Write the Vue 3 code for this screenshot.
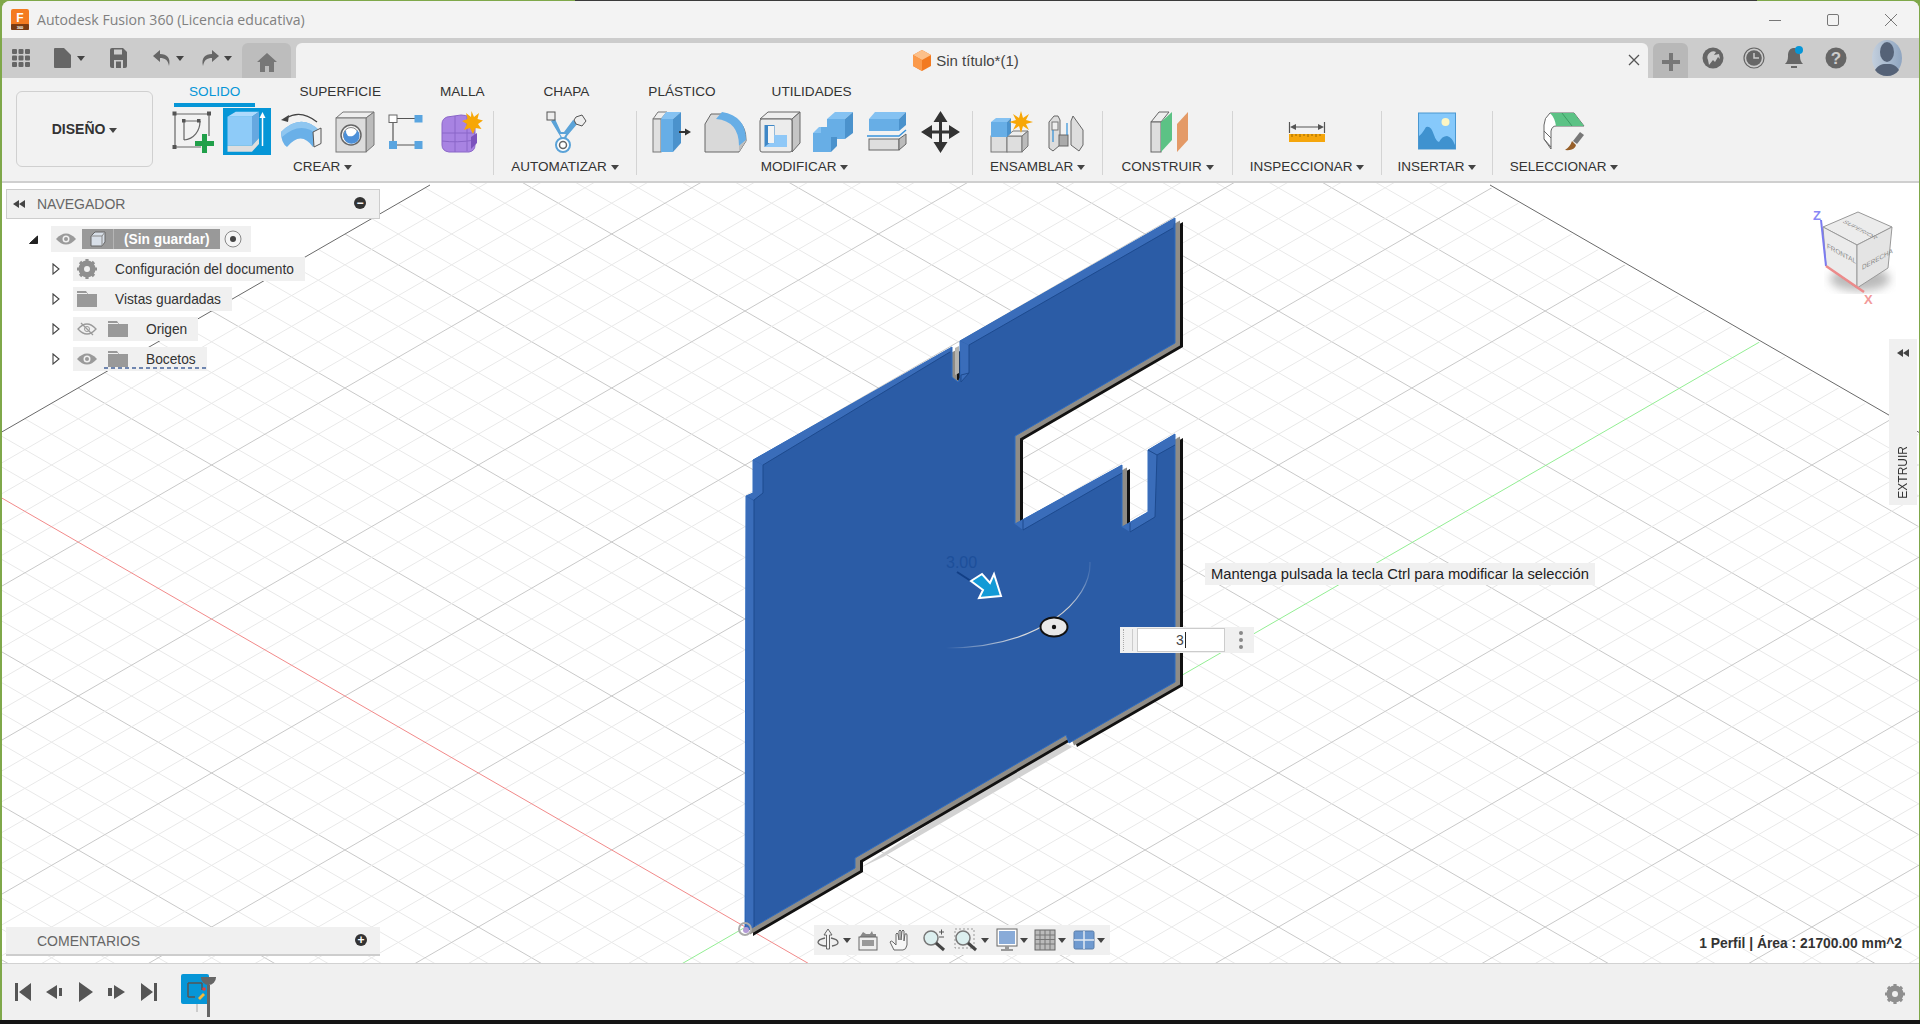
<template>
  <div class="desktop">
    <div class="window">
      <!-- title bar -->
      <header class="titlebar">
        <svg class="logo" width="20" height="22" viewBox="0 0 20 22">
          <rect x="1" y="0" width="18" height="21" rx="2" fill="#f47b20" />
          <rect x="1" y="15" width="18" height="6" rx="1" fill="#7a3b12" />
          <text x="10" y="13" text-anchor="middle" class="logo-f">F</text>
          <text x="10" y="20" text-anchor="middle" class="logo-n">360</text>
        </svg>
        <span class="app-title">Autodesk Fusion 360 (Licencia educativa)</span>
        <div class="win-controls">
          <svg width="14" height="14" viewBox="0 0 14 14"><path d="M1 7.500h12" stroke="#777" /></svg>
          <svg width="14" height="14" viewBox="0 0 14 14"><rect x="1.500" y="1.500" width="11" height="11" rx="1.500" fill="none" stroke="#777" /></svg>
          <svg width="14" height="14" viewBox="0 0 14 14"><path d="M1 1l12 12M13 1L1 13" stroke="#777" /></svg>
        </div>
      </header>

      <!-- document tabs -->
      <div class="tabbar">
        <svg class="tb-apps" width="18" height="18" viewBox="0 0 18 18" fill="#666">
          <rect x="0" y="0" width="5" height="5" rx="1" /><rect x="6.500" y="0" width="5" height="5" rx="1" /><rect x="13" y="0" width="5" height="5" rx="1" />
          <rect x="0" y="6.500" width="5" height="5" rx="1" /><rect x="6.500" y="6.500" width="5" height="5" rx="1" /><rect x="13" y="6.500" width="5" height="5" rx="1" />
          <rect x="0" y="13" width="5" height="5" rx="1" /><rect x="6.500" y="13" width="5" height="5" rx="1" /><rect x="13" y="13" width="5" height="5" rx="1" />
        </svg>
        <svg class="tb-file" width="17" height="20" viewBox="0 0 17 20"><path d="M0 1a1 1 0 0 1 1-1h9l7 7v12a1 1 0 0 1-1 1H1a1 1 0 0 1-1-1z" fill="#666" /></svg>
        <i class="caret tb-c1"></i>
        <svg class="tb-save" width="17" height="20" viewBox="0 0 17 20"><path d="M0 2a2 2 0 0 1 2-2h11l4 4v14a2 2 0 0 1-2 2H2a2 2 0 0 1-2-2z" fill="#666" /><rect x="4" y="1.500" width="8" height="5" fill="#ccc" /><rect x="4" y="12" width="9" height="8" fill="#ccc" /><rect x="6" y="13.500" width="5" height="6.500" fill="#666" /></svg>
        <svg class="tb-undo" width="20" height="18" viewBox="0 0 20 18"><path d="M8 1L1 7l7 6V9c5 0 8 2 9 8 2-8-2-12-9-12z" fill="#666" /></svg>
        <i class="caret tb-c2"></i>
        <svg class="tb-redo" width="20" height="18" viewBox="0 0 20 18"><path d="M12 1l7 6-7 6V9c-5 0-8 2-9 8C1 9 5 5 12 5z" fill="#666" /></svg>
        <i class="caret tb-c2"></i>
        <div class="home-tab">
          <svg width="20" height="19" viewBox="0 0 20 19"><path d="M10 0L0 9h3v10h5v-6h4v6h5V9h3z" fill="#777" /></svg>
        </div>
        <div class="doc-tab">
          <svg width="20" height="21" viewBox="0 0 20 21">
            <path d="M10 0l9 5v11l-9 5-9-5V5z" fill="#f27a21" />
            <path d="M10 0l9 5-9 5-9-5z" fill="#fcc08a" />
            <path d="M1 5l9 5v11l-9-5z" fill="#fb9a4b" />
          </svg>
          <span>Sin título*(1)</span>
          <svg class="doc-close" width="12" height="12" viewBox="0 0 12 12"><path d="M1 1l10 10M11 1L1 11" stroke="#555" stroke-width="1.300" /></svg>
        </div>
        <div class="plus-tab">
          <svg width="18" height="18" viewBox="0 0 18 18"><path d="M7 0h4v7h7v4h-7v7H7v-7H0V7h7z" fill="#777" /></svg>
        </div>
        <svg class="tr tr-1" width="22" height="24" viewBox="0 0 22 24">
          <circle cx="11" cy="12" r="10.500" fill="#666" />
          <path d="M6 14a6 6 0 0 1 8-8l-2 3 5-1 1 5-2-2-3 5-2-2-4 5z" fill="#ccc" />
        </svg>
        <svg class="tr tr-2" width="22" height="24" viewBox="0 0 22 24">
          <circle cx="11" cy="12" r="10" fill="none" stroke="#666" stroke-width="1.200" />
          <circle cx="11" cy="12" r="7.800" fill="#666" />
          <path d="M11 7v5h5" stroke="#ccc" stroke-width="1.500" fill="none" />
        </svg>
        <svg class="tr tr-3" width="22" height="26" viewBox="0 0 22 26">
          <path d="M9 3c-4 1-5 4-5 8 0 4-1 6-3 8h18c-2-2-3-4-3-8 0-4-1-7-5-8z" fill="#666" />
          <rect x="7" y="21" width="6" height="2" fill="#666" />
          <circle cx="15" cy="5" r="4" fill="#0696d7" />
        </svg>
        <svg class="tr tr-4" width="22" height="24" viewBox="0 0 22 24">
          <circle cx="11" cy="12" r="10.500" fill="#666" />
          <text x="11" y="18" text-anchor="middle" class="help-q">?</text>
        </svg>
        <svg class="tr tr-5" width="30" height="36" viewBox="0 0 30 36">
          <defs>
            <linearGradient id="av" x1="0" y1="0" x2="1" y2="0"><stop offset="0" stop-color="#c3cfdd" /><stop offset="1" stop-color="#8fa5c0" /></linearGradient>
          </defs>
          <ellipse cx="15" cy="18" rx="15" ry="18" fill="url(#av)" />
          <ellipse cx="15" cy="12" rx="7" ry="10" fill="#556277" />
          <path d="M3 30c4-6 8-6 12-6s8 0 12 6c-3 4-7 6-12 6S6 34 3 30z" fill="#556277" />
        </svg>
      </div>

      <!-- ribbon -->
      <div class="ribbon">
        <button class="design-btn">DISEÑO <i class="caret"></i></button>
        <div class="ribbon-main">
          <nav class="ribbon-tabs">
            <span v-for="t in ribbonTabs" :key="t" class="r-tab" :class="{ active: t === 'SOLIDO' }">{{ t }}</span>
          </nav>
          <div class="groups">
            <section class="group g-create">
              <div class="tools">
                <svg class="tool" viewBox="0 0 54 54">
                  <path d="M6 6h34M6 6v33M6 39h26M40 6v22" stroke="#666" fill="none" stroke-width="1.200" />
                  <path d="M15 13h14M15 13v19M31 13c0 10-6 18-16 19" stroke="#666" fill="none" stroke-width="1.200" />
                  <g fill="#555"><rect x="3.500" y="3.500" width="4" height="4" /><rect x="38" y="3.500" width="4" height="4" /><rect x="3.500" y="37" width="4" height="4" /><rect x="13" y="11" width="3.500" height="3.500" /><rect x="28" y="11" width="3.500" height="3.500" /></g>
                  <path d="M33 26h5v7h7v5h-7v7h-5v-7h-7v-5h7z" fill="#21a04a" />
                </svg>
                <svg class="tool" viewBox="0 0 54 54">
                  <rect x="0" y="0" width="48" height="47" fill="#0696d7" />
                  <polygon points="4.500,8.700 12.700,3.700 36,3.700 29,8.700" fill="#aedafc" />
                  <rect x="4.500" y="8.700" width="24.500" height="29" fill="#8ecbf8" />
                  <polygon points="29,8.700 36,3.700 36,30 29,37.700" fill="#66a8e0" />
                  <polygon points="4.500,37.700 29,37.700 36,30 36,36 29,43.700 4.500,43.700" fill="#dedede" />
                  <path d="M39.500 38V8" stroke="#fff" stroke-width="1.500" />
                  <path d="M39.500 4l3 6h-6z" fill="#fff" />
                </svg>
                <svg class="tool" viewBox="0 0 54 54">
                  <path d="M4 24Q24 4 43 23L36 39Q24 22 10 39Q4 35 4 24Z" fill="#6ab0e8" />
                  <path d="M4 24Q24 4 43 23L41 27Q24 12 5 29Z" fill="#8fc6f0" />
                  <path d="M36 24l8-4v15.500l-7 3.500z" fill="#f0f0f0" stroke="#555" />
                  <path d="M40 14Q24 1 9 10" stroke="#444" fill="none" stroke-width="1.300" />
                  <path d="M4 12l8-5-1 7z" fill="#444" />
                </svg>
                <svg class="tool" viewBox="0 0 54 54">
                  <polygon points="5,10 12,4 43,4 35,10" fill="#eee" stroke="#777" />
                  <polygon points="35,10 43,4 43,37 35,44" fill="#bbb" stroke="#777" />
                  <rect x="5" y="10" width="30" height="34" fill="#dcdcdc" stroke="#777" />
                  <circle cx="20" cy="27" r="10" fill="#f5f5f5" stroke="#666" stroke-width="1.500" />
                  <circle cx="20" cy="27" r="7.500" fill="#fff" stroke="#888" />
                  <path d="M15 22a8 8 0 1 0 11 0 7 7 0 0 1-9 6 7 7 0 0 1-2-6z" fill="#4d90d8" />
                </svg>
                <svg class="tool" viewBox="0 0 54 54">
                  <path d="M12 10.500h18M8 14v19M12 37h18" stroke="#555" stroke-width="1.200" />
                  <rect x="4" y="7" width="8" height="7.500" fill="#fff" stroke="#666" />
                  <rect x="29.500" y="7" width="8" height="7.500" fill="#5aa5e0" />
                  <rect x="4" y="33" width="8" height="8" fill="#5aa5e0" />
                  <rect x="29.500" y="33" width="8" height="8" fill="#5aa5e0" />
                </svg>
                <svg class="tool" viewBox="0 0 54 54">
                  <path d="M3 16q0-5 5-7l14-2q10 0 14 8v22q0 6-6 7H10q-7-1-7-7z" fill="#a883e2" stroke="#8a66c8" />
                  <path d="M3 25h33M3 33q15 2 33-1M16 8v36M28 8v35" stroke="#8a66c8" fill="none" />
                  <path d="M32 29l6-4v10l-6 6z" fill="#7b52bd" />
                  <polygon points="32.500,3 35,9 40,5 38.500,11 44,12.500 39,16 42.500,21 36.500,20 34,26 31,20 25,22 28,16 23,13 28.500,11 27,5 32,9" fill="#f7a707" />
                </svg>
              </div>
              <div class="label">CREAR <i class="caret"></i></div>
            </section>
            <i class="sep"></i>
            <section class="group g-auto">
              <div class="tools">
                <svg class="tool" viewBox="0 0 54 54">
                  <path d="M13 13l9 15 2 6h3l2-6 11-13-5-3-9 12h-3l-6-13z" fill="#5ba3d8" />
                  <path d="M22 26l3 5 3-5z" fill="#f2f2f2" />
                  <circle cx="25" cy="37" r="7" fill="#fff" stroke="#5ba3d8" stroke-width="2" />
                  <circle cx="25" cy="37" r="3.500" fill="none" stroke="#666" stroke-width="1.500" />
                  <rect x="9" y="4" width="8" height="8" fill="#eee" stroke="#555" />
                  <polygon points="38,9 44,7 48,13 44,18 38,16 36,12" fill="#eee" stroke="#555" />
                </svg>
              </div>
              <div class="label">AUTOMATIZAR <i class="caret"></i></div>
            </section>
            <i class="sep"></i>
            <section class="group g-modify">
              <div class="tools">
                <svg class="tool" viewBox="0 0 54 54">
                  <polygon points="10,11 15,4 24,4 18,11" fill="#eee" stroke="#777" />
                  <rect x="10" y="11" width="8" height="33" fill="#e0e0e0" stroke="#777" />
                  <rect x="18" y="11" width="12" height="33" fill="#67aee6" />
                  <polygon points="18,11 23,4 38,4 30,11" fill="#85c2f2" />
                  <polygon points="30,11 38,4 38,35 30,44" fill="#4b92cc" />
                  <path d="M36 24h7" stroke="#333" stroke-width="2" /><path d="M48 24l-6-3.500v7z" fill="#333" />
                </svg>
                <svg class="tool" viewBox="0 0 54 54">
                  <path d="M8 44V16l6-10h10q25 3 25 26v1l-7 11z" fill="#d9d9d9" stroke="#666" />
                  <path d="M19 11l6-7q24 4 24 28l-7 6q0-25-23-27z" fill="#67aee6" />
                  <path d="M42 38l7-6v1l-7 11z" fill="#bdbdbd" />
                </svg>
                <svg class="tool" viewBox="0 0 54 54">
                  <polygon points="9,11 17,4 49,4 41,11" fill="#eee" stroke="#666" />
                  <polygon points="41,11 49,4 49,35 41,44" fill="#c5c5c5" stroke="#666" />
                  <rect x="9" y="11" width="32" height="33" rx="2" fill="#ececec" stroke="#666" />
                  <rect x="13.500" y="17" width="10" height="22" fill="#3f87c6" />
                  <rect x="17" y="18" width="6" height="17" fill="#f4f4f4" />
                  <path d="M23 27h13v12H13.500l5-4h5z" fill="#8fc8f7" />
                </svg>
                <svg class="tool" viewBox="0 0 54 54">
                  <polygon points="22,11 30,4 48,4 40,11" fill="#85c2f2" />
                  <polygon points="40,11 48,4 48,25 40,31" fill="#4b92cc" />
                  <rect x="22" y="11" width="18" height="20" fill="#67aee6" />
                  <polygon points="8,25 14,19 32,19 26,25" fill="#85c2f2" />
                  <rect x="8" y="25" width="18" height="19" fill="#67aee6" />
                  <polygon points="26,25 32,19 32,38 26,44" fill="#4b92cc" />
                  <rect x="16" y="19" width="16" height="10" fill="#67aee6" />
                </svg>
                <svg class="tool" viewBox="0 0 54 54">
                  <polygon points="10,11 16,4 47,4 40,11" fill="#85c2f2" />
                  <rect x="10" y="11" width="30" height="12" fill="#67aee6" />
                  <polygon points="40,11 47,4 47,17 40,23" fill="#4b92cc" />
                  <path d="M8 28h32l7-6" stroke="#3a94dc" stroke-width="1.500" fill="none" />
                  <rect x="10" y="31" width="30" height="11" fill="#dedede" stroke="#666" />
                  <polygon points="40,31 47,26 47,36 40,42" fill="#bbb" stroke="#666" />
                </svg>
                <svg class="tool" viewBox="0 0 54 54">
                  <path d="M27.500 6v36M11 24h33" stroke="#333" stroke-width="3" />
                  <path d="M27.500 3l7 11h-14zM27.500 45l7-11h-14zM8 24l11-7v14zM47 24l-11-7v14z" fill="#333" />
                </svg>
              </div>
              <div class="label">MODIFICAR <i class="caret"></i></div>
            </section>
            <i class="sep"></i>
            <section class="group g-assemble">
              <div class="tools">
                <svg class="tool" viewBox="0 0 54 54">
                  <rect x="7" y="28" width="16" height="16" fill="#dedede" stroke="#777" />
                  <rect x="23" y="28" width="15" height="16" fill="#dedede" stroke="#777" />
                  <polygon points="23,28 29,23 44,23 38,28" fill="#eee" stroke="#777" />
                  <polygon points="38,28 44,23 44,38 38,44" fill="#bbb" stroke="#777" />
                  <rect x="7" y="14" width="16" height="15" fill="#67aee6" />
                  <polygon points="7,14 12,10 27,10 23,14" fill="#85c2f2" />
                  <polygon points="23,14 27,10 27,25 23,29" fill="#4b92cc" />
                  <polygon points="37,3 39,10 45,6 42,12 49,14 42,16 45,22 39,18 37,25 35,18 29,22 32,16 25,14 32,12 29,6 35,10" fill="#f7a707" />
                </svg>
                <svg class="tool" viewBox="0 0 54 54">
                  <path d="M11 14l5-6h4l2 4v25l-7 6-4-3z" fill="#ddd" stroke="#666" />
                  <path d="M33 13l2-5 10 14v15l-4 6-8-6z" fill="#ddd" stroke="#666" />
                  <rect x="21" y="27" width="9" height="11" fill="#aaa" stroke="#666" />
                  <rect x="14" y="14" width="6" height="8" fill="#eee" stroke="#777" />
                  <path d="M15 22v12M29 15v12" stroke="#2f8fd8" stroke-width="1.200" />
                </svg>
              </div>
              <div class="label">ENSAMBLAR <i class="caret"></i></div>
            </section>
            <i class="sep"></i>
            <section class="group g-build">
              <div class="tools">
                <svg class="tool" viewBox="0 0 54 54">
                  <polygon points="10,14 18,4 28,4 20,14" fill="#eee" stroke="#666" />
                  <rect x="10" y="14" width="10" height="30" fill="#dedede" stroke="#666" />
                  <polygon points="20,14 31,4 31,32 20,44" fill="#5cc285" />
                  <polygon points="36,16 47,4 47,32 36,44" fill="#e49a67" />
                </svg>
              </div>
              <div class="label">CONSTRUIR <i class="caret"></i></div>
            </section>
            <i class="sep"></i>
            <section class="group g-inspect">
              <div class="tools">
                <svg class="tool" viewBox="0 0 54 54">
                  <path d="M9.500 14v11M44.500 14v11M13 19h28" stroke="#555" stroke-width="1.200" />
                  <path d="M10 19l6-3v6zM44 19l-6-3v6z" fill="#555" />
                  <rect x="9" y="26" width="36" height="8" fill="#f5a60c" />
                  <path d="M12 26v3M16 26v2M20 26v3M24 26v2M28 26v3M32 26v2M36 26v3M40 26v2" stroke="#9a6700" />
                </svg>
              </div>
              <div class="label">INSPECCIONAR <i class="caret"></i></div>
            </section>
            <i class="sep"></i>
            <section class="group g-insert">
              <div class="tools">
                <svg class="tool" viewBox="0 0 54 54">
                  <rect x="8.500" y="5" width="37" height="36" fill="#86c9fb" stroke="#4a97d0" />
                  <circle cx="35.500" cy="14" r="4" fill="#fdf6c4" />
                  <path d="M9 41V28q3-2 7-9 5-2 8 8 2 6 5 7 3-6 8-6 5 1 8 9v4z" fill="#3f92cf" />
                </svg>
              </div>
              <div class="label">INSERTAR <i class="caret"></i></div>
            </section>
            <i class="sep"></i>
            <section class="group g-select">
              <div class="tools">
                <svg class="tool" viewBox="0 0 54 54">
                  <path d="M7 17q0-7 6-12h24l10 13H19q-4 0-5 5v18l-7-10z" fill="#fff" stroke="#666" />
                  <path d="M7 23l7 7M7 31l7 8" stroke="#666" />
                  <path d="M13 5h24l10 13H19q-1-8-6-13z" fill="#5cc285" />
                  <path d="M25 5l10 13" stroke="#3d9a63" />
                  <path d="M36 33l7-9 4 3-7 9z" fill="#777" />
                  <path d="M35 33l4 4q-1 6-11 5 5-3 7-9z" fill="#97602a" />
                </svg>
              </div>
              <div class="label">SELECCIONAR <i class="caret"></i></div>
            </section>
          </div>
        </div>
      </div>

      <!-- 3d canvas -->
      <main class="canvas">
        <svg class="scene" width="1917" height="780" viewBox="2 183 1917 780">
          <defs>
            <clipPath id="gridClip">
              <polygon points="958,-120 1930,441 1930,1100 0,1100 0,433" />
            </clipPath>
            <filter id="blur4"><feGaussianBlur stdDeviation="5" /></filter>
            <linearGradient id="arcFade" x1="0" y1="0" x2="1" y2="0">
              <stop offset="0" stop-color="#fff" stop-opacity="0" />
              <stop offset="0.55" stop-color="#dcdcdc" />
              <stop offset="0.85" stop-color="#d0d0d0" />
              <stop offset="1" stop-color="#fff" stop-opacity="0.1" />
            </linearGradient>
          </defs>
          <g clip-path="url(#gridClip)">
            <line v-for="l in gridLines" :key="l.id" :x1="l.x1" :y1="l.y1" :x2="l.x2" :y2="l.y2" :stroke="l.major ? '#c9c9c9' : '#e9e9e9'" />
            <line x1="0" y1="497" x2="1000" y2="1074" stroke="#f28a8a" />
            <line x1="600" y1="1011" x2="1763" y2="340" stroke="#93ee93" />
          </g>
          <path d="M0 433L430 185" stroke="#6a6a6a" />
          <path d="M1490 185L1920 433" stroke="#6a6a6a" />

          <!-- sólido -->
          <polygon points="860,868 1060,740 1072,747 883,857" fill="#d2d2d2" />
          <polygon :points="platePoints" transform="translate(8 4)" fill="#111" />
          <polygon :points="platePoints" transform="translate(5 2.500)" fill="#8f8c86" />
          <polygon points="955,348 959,346 959,373 955,375" fill="#b4b4b0" />
          <polygon :points="platePoints" fill="#2b5ca6" stroke="#2f6cc0" stroke-width="1" />
          <g fill="#3a6dba">
            <polygon points="1175,218 1173,228 969,345 960,341" />
            <polygon points="952,347 950,352 763,465 753,460" />
            <polygon points="753,460 763,465 763,493 754,500 746,496 753,493" />
            <polygon points="746,496 754,501 754,927 746,932" />
            <polygon points="960,341 969,345 969,373 961,382" />
            <polygon points="1122,465 1122,473 1023,530 1015,524" />
            <polygon points="1148,450 1157,455 1155,517 1130,532 1122,527 1148,512" />
            <polygon points="1148,450 1175,434 1175,445 1157,455" />
          </g>
          <g fill="none" stroke="#1d4a8e">
            <path d="M1173 228L969 345V373L961 382V375L969 373" />
            <path d="M950 352L763 465V493L754 500V927" />
            <path d="M1023 520V530L1122 473" />
            <path d="M1130 523V532L1155 517L1157 455L1175 445" />
            <path d="M1148 450L1157 455" />
          </g>

          <!-- manipulador -->
          <text x="946" y="568" class="dim-text">3.00</text>
          <path d="M957 572L974 583" stroke="#123f86" stroke-width="2" />
          <path d="M1090 562C1092 600 1040 648 946 648" fill="none" stroke="url(#arcFade)" stroke-width="1.200" />
          <polygon points="1001,596 979,598 983,590 971,581 982,574 990,583 994,574" fill="#129ad6" stroke="#fff" stroke-width="2" />
          <ellipse cx="1054" cy="627" rx="13.500" ry="9.500" fill="#e8e8e8" stroke="#111" stroke-width="2" />
          <circle cx="1054" cy="627" r="2.200" fill="#111" />

          <!-- origen -->
          <circle cx="745" cy="929" r="6" fill="none" stroke="#aaa" stroke-width="2" />
          <circle cx="746" cy="930" r="3" fill="#b39ad6" />

          <!-- viewcube -->
          <ellipse cx="1860" cy="279" rx="30" ry="12" fill="#777" opacity="0.5" filter="url(#blur4)" />
          <polygon points="1823,227 1858,212 1892,227 1857,245" fill="#ececec" stroke="#999" />
          <polygon points="1823,227 1857,245 1857,288 1826,266" fill="#ebebeb" stroke="#999" />
          <polygon points="1857,245 1892,227 1888,268 1857,288" fill="#e4e4e4" stroke="#999" />
          <path d="M1821 220L1826 266" stroke="#7b7bf0" stroke-width="2" />
          <path d="M1826 266L1864 292" stroke="#ec8a8a" stroke-width="2.500" />
          <text x="1813" y="220" class="axis-z">Z</text>
          <text x="1864" y="304" class="axis-x">X</text>
          <text class="cube-t" transform="matrix(.9 .48 -.8 .38 1842 222)">SUPERIOR</text>
          <text class="cube-t" transform="matrix(.9 .5 0 1 1827 248)">FRONTAL</text>
          <text class="cube-t" transform="matrix(.9 -.5 0 1 1862 270)">DERECHA</text>
        </svg>

        <!-- navegador -->
        <div class="panel nav-panel">
          <svg width="12" height="8" viewBox="0 0 12 8"><path d="M6 0v8L0 4zM12 0v8L6 4z" fill="#444" /></svg>
          <span>NAVEGADOR</span>
          <i class="dot-btn">−</i>
        </div>
        <div class="tree">
          <div class="tree-root">
            <svg class="root-arrow" width="9" height="9" viewBox="0 0 9 9"><path d="M8.500 1v7.500H.5z" fill="#222" stroke="#222" /></svg>
            <div class="pill pill-root">
              <svg class="eye" width="20" height="12" viewBox="0 0 20 12"><path d="M0 6q10-11 20 0Q10 17 0 6z" fill="#9a9a9a" /><circle cx="10" cy="6" r="3.500" fill="#f0f0f0" /><circle cx="10" cy="6" r="2" fill="#9a9a9a" /></svg>
              <div class="root-name">
                <span class="root-cube">
                  <svg width="16" height="16" viewBox="0 0 16 16"><path d="M1 5l4-4h10v10l-3 4H1z" fill="#d8dfe8" stroke="#666" /><path d="M1 5h11v10M12 5l3-4" stroke="#888" fill="none" /></svg>
                </span>
                <b>(Sin guardar)</b>
              </div>
              <svg class="radio" width="18" height="18" viewBox="0 0 18 18"><circle cx="9" cy="9" r="8" fill="#f5f5f5" stroke="#888" /><circle cx="9" cy="9" r="3" fill="#444" /></svg>
            </div>
          </div>
          <div v-for="row in treeRows" :key="row.name" class="tree-row">
            <svg class="arrow" width="8" height="12" viewBox="0 0 8 12"><path d="M1 1l6 5-6 5z" fill="#fff" stroke="#444" stroke-width="1.100" /></svg>
            <div class="pill" :class="{ sketches: row.name === 'Bocetos' }">
              <svg v-if="row.icon === 'gear'" class="ico" width="20" height="20" viewBox="0 0 20 20">
                <circle cx="10" cy="10" r="6" fill="none" stroke="#8f8f8f" stroke-width="5" />
                <path d="M10 0v20M0 10h20M3 3l14 14M17 3L3 17" stroke="#8f8f8f" stroke-width="3.200" />
                <circle cx="10" cy="10" r="3" fill="#f0f0f0" />
              </svg>
              <svg v-if="row.eye === 'on'" class="ico" width="20" height="12" viewBox="0 0 20 12"><path d="M0 6q10-11 20 0Q10 17 0 6z" fill="#9a9a9a" /><circle cx="10" cy="6" r="3.500" fill="#f0f0f0" /><circle cx="10" cy="6" r="2" fill="#9a9a9a" /></svg>
              <svg v-if="row.eye === 'off'" class="ico" width="20" height="14" viewBox="0 0 20 14"><path d="M1 7q9-10 18 0Q10 17 1 7z" fill="none" stroke="#9a9a9a" stroke-width="1.300" /><circle cx="10" cy="7" r="2.500" fill="none" stroke="#9a9a9a" /><path d="M4 1l12 12" stroke="#9a9a9a" stroke-width="1.300" /></svg>
              <svg class="ico folder" :class="{ first: !row.eye && row.icon !== 'gear' }" v-if="row.icon === 'folder'" width="20" height="16" viewBox="0 0 20 16"><path d="M0 0h9l2 3h9v13H0z" fill="#999" /><path d="M0 2.500h10" stroke="#f0f0f0" /></svg>
              <span class="row-name">{{ row.name }}</span>
            </div>
          </div>
        </div>

        <div class="panel comments-panel">
          <span>COMENTARIOS</span>
          <i class="dot-btn">+</i>
        </div>

        <!-- paleta lateral -->
        <aside class="side-palette">
          <svg width="12" height="8" viewBox="0 0 12 8"><path d="M6 0v8L0 4zM12 0v8L6 4z" fill="#444" /></svg>
          <span>EXTRUIR</span>
        </aside>

        <!-- ayuda y entrada -->
        <div class="hint">Mantenga pulsada la tecla Ctrl para modificar la selección</div>
        <div class="dim-input">
          <i class="grip"></i>
          <div class="dim-box"><span>3</span></div>
          <div class="dots"><i></i><i></i><i></i></div>
        </div>

        <!-- barra de navegación -->
        <div class="navbar">
          <svg class="nb m2" viewBox="0 0 24 24"><path d="M12 1l4 6h-2.500v14h-3V7H8z" fill="#f4f4f4" stroke="#666" /><path d="M9 10C4 11 2 13 2 14.500S6 18 10 18M15 10c5 1 7 3 7 4.500s-3 3-6 3.500" fill="none" stroke="#666" stroke-width="1.300" /></svg>
          <i class="caret c2"></i>
          <svg class="nb m4" viewBox="0 0 24 24"><path d="M3 10l4-6 3 2h4l2-3 1 3h3v4z" fill="#888" /><rect x="3" y="9" width="18" height="13" fill="#eee" stroke="#666" /><rect x="6" y="12" width="12" height="6" fill="#999" /></svg>
          <svg class="nb m9" viewBox="0 0 24 24"><path d="M5 22Q3 18 1 14q1-2 3 0l3 3V6q1-2 2 0l1 6V3q1-2 2 0v9l1-9q1-2 2 0v10l1-7q2-1 2 1v10q-1 5-4 5z" fill="#f6f6f6" stroke="#666" /></svg>
          <svg class="nb m9" viewBox="0 0 24 24"><circle cx="9" cy="10" r="7" fill="#dcefef" stroke="#777" stroke-width="1.500" /><path d="M14 15l8 7" stroke="#444" stroke-width="3" /><path d="M17 4h5M19.500 1.500v5M17 9h5" stroke="#555" /></svg>
          <svg class="nb m8" viewBox="0 0 24 24"><rect x="1" y="1" width="19" height="19" fill="none" stroke="#999" stroke-dasharray="2 2" /><circle cx="9" cy="10" r="7" fill="#dcefef" stroke="#777" stroke-width="1.500" /><path d="M14 15l8 7" stroke="#444" stroke-width="3" /></svg>
          <i class="caret c2"></i>
          <svg class="nb m5" viewBox="0 0 24 24"><rect x="2" y="1" width="20" height="17" fill="#fff" stroke="#666" /><rect x="4" y="3" width="16" height="13" fill="#89abd8" /><rect x="10" y="18" width="4" height="3" fill="#999" /><rect x="6" y="21" width="12" height="2" fill="#999" /></svg>
          <i class="caret c0"></i>
          <svg class="nb m4" viewBox="0 0 24 24"><rect x="2" y="2" width="20" height="20" fill="#bbb" stroke="#666" /><path d="M2 7h20M2 11.500h20M2 16h20M7 2v20M12 2v20M17 2v20" stroke="#777" fill="none" /></svg>
          <i class="caret c0"></i>
          <svg class="nb m5" viewBox="0 0 24 24"><rect x="2" y="3" width="20" height="18" rx="1.500" fill="#6f9ad0" stroke="#5a7da8" /><path d="M12 3v18M2 12h20" stroke="#e4eaf2" stroke-width="1.500" /></svg>
          <i class="caret c0"></i>
        </div>

        <div class="measure">1 Perfil | Área : 21700.00 mm^2</div>
      </main>

      <!-- línea de tiempo -->
      <footer class="timeline">
        <svg class="tl t1" width="16" height="25" viewBox="0 0 16 25"><path d="M0 3h3v18H0zM16 3v18L4 12z" fill="#555" /></svg>
        <svg class="tl t2" width="16" height="25" viewBox="0 0 16 25"><path d="M11 5v14L0 12zM13 8h3v8h-3z" fill="#555" /></svg>
        <svg class="tl t3" width="16" height="25" viewBox="0 0 16 25"><path d="M1 2l14 10L1 22z" fill="#555" /></svg>
        <svg class="tl t4" width="17" height="25" viewBox="0 0 17 25"><path d="M6 5v14l11-7zM0 8h4v8H0z" fill="#555" /></svg>
        <svg class="tl t5" width="16" height="25" viewBox="0 0 16 25"><path d="M0 3v18l12-9zM13 3h3v18h-3z" fill="#555" /></svg>
        <div class="feature">
          <svg width="28" height="30" viewBox="0 0 28 30">
            <rect width="28" height="30" rx="2" fill="#0696d7" />
            <path d="M7 9h14M7 9v14M7 23h7M21 9v7" stroke="#555" stroke-width="1.500" />
            <path d="M17 24l5-5 2 2-5 5z" fill="#f5b93a" />
            <circle cx="23" cy="15" r="1.800" fill="#e04040" />
          </svg>
          <i class="feature-stem"></i>
        </div>
        <div class="marker"></div>
        <svg class="gear" width="20" height="20" viewBox="0 0 20 20">
          <circle cx="10" cy="10" r="6" fill="none" stroke="#8f8f8f" stroke-width="5" />
          <path d="M10 0v20M0 10h20M3 3l14 14M17 3L3 17" stroke="#8f8f8f" stroke-width="3.200" />
          <circle cx="10" cy="10" r="3" fill="#f0f0f0" />
        </svg>
      </footer>
    </div>
  </div>
</template>

<script setup>
import { computed } from "vue";

const ribbonTabs = ["SOLIDO", "SUPERFICIE", "MALLA", "CHAPA", "PLÁSTICO", "UTILIDADES"];

const treeRows = [
  { name: "Configuración del documento", icon: "gear" },
  { name: "Vistas guardadas", icon: "folder" },
  { name: "Origen", icon: "folder", eye: "off" },
  { name: "Bocetos", icon: "folder", eye: "on" },
];

// silueta de la placa, en coordenadas de página
const platePoints =
  "1175,218 960,341 960,378 958,382 952,377 952,347 753,460 753,493 746,496 745,932 " +
  "855,868 855,858 1066,735 1069,743 1175,682 1175,434 1148,450 1148,512 1122,527 " +
  "1122,465 1015,524 1015,436 1175,343";

// rejilla isométrica: origen en (745, 927), 30 grados
const SLOPE = 0.5774;
const STEP = 30.8;
const gridLines = computed(() => {
  const lines = [];
  for (let k = -37; k <= 16; k++) {
    if (k === 0) continue;
    const c = 927 + k * STEP;
    lines.push({
      id: "d" + k,
      major: k % 5 === 0,
      x1: 0,
      y1: c - SLOPE * 745,
      x2: 1920,
      y2: c + SLOPE * 1175,
    });
  }
  for (let k = -29; k <= 24; k++) {
    if (k === 0) continue;
    const c = 927 + k * STEP;
    lines.push({
      id: "u" + k,
      major: k % 5 === 0,
      x1: 0,
      y1: c + SLOPE * 745,
      x2: 1920,
      y2: c - SLOPE * 1175,
    });
  }
  return lines;
});
</script>

<style>
html,
body {
  margin: 0;
  background: #111;
}
</style>

<style scoped>
.desktop {
  width: 1920px;
  height: 1024px;
  box-sizing: border-box;
  padding: 1px 1px 4px 2px;
  overflow: hidden;
  background:
    linear-gradient(#151515, #151515) bottom / 100% 4px no-repeat,
    linear-gradient(90deg, #7fa84a 0 575px, #3a3a3a 575px 1757px, #7fa84a 1757px);
  font-family: "Liberation Sans", Arial, sans-serif;
}

.window {
  height: 100%;
  display: flex;
  flex-direction: column;
  background: #f2f2f2;
  border-radius: 8px 8px 0 0;
  overflow: hidden;
}

.caret {
  display: inline-block;
  width: 0;
  height: 0;
  border-left: 4px solid transparent;
  border-right: 4px solid transparent;
  border-top: 5px solid #444;
  vertical-align: middle;
}

/* title bar */
.titlebar {
  height: 37px;
  flex: none;
  display: flex;
  align-items: center;
  padding-left: 8px;
  background: #f3f3f3;
}

.logo-f {
  font: bold 12px "Liberation Sans", sans-serif;
  fill: #fff;
}

.logo-n {
  font: bold 4px "Liberation Sans", sans-serif;
  fill: #fff;
}

.help-q {
  font: bold 17px "Liberation Sans", sans-serif;
  fill: #ccc;
}

.app-title {
  margin-left: 7px;
  font-family: "Open Sans", sans-serif;
  font-size: 14.1px;
  color: #808080;
}

.win-controls {
  margin-left: auto;
  display: flex;
  gap: 44px;
  padding-right: 21px;
}

/* tabs */
.tabbar {
  height: 40px;
  flex: none;
  display: flex;
  align-items: center;
  padding-right: 17px;
  background: #cccccc;
}

.tb-apps { margin-left: 10px; }
.tb-file { margin-left: 24px; }
.tb-c1 { margin-left: 6px; }
.tb-save { margin-left: 25px; }
.tb-undo { margin-left: 25px; }
.tb-c2 { margin-left: 4px; }
.tb-redo { margin-left: 16px; }

.home-tab {
  align-self: flex-end;
  width: 49px;
  height: 35px;
  margin-left: 10px;
  padding-top: 10px;
  box-sizing: border-box;
  text-align: center;
  background: #bdbdbd;
  border-radius: 6px 6px 0 0;
}

.doc-tab {
  position: relative;
  align-self: flex-end;
  flex: 1;
  height: 35px;
  margin-left: 5px;
  padding-right: 13px;
  display: flex;
  align-items: center;
  justify-content: center;
  gap: 4px;
  background: #f2f2f2;
  border-radius: 6px 6px 0 0;
  font-size: 15px;
  color: #444;
}

.doc-close {
  position: absolute;
  right: 8px;
  top: 11px;
}

.plus-tab {
  align-self: flex-end;
  width: 35px;
  height: 35px;
  margin-left: 5px;
  padding-top: 10px;
  box-sizing: border-box;
  text-align: center;
  background: #b8b8b8;
  border-radius: 6px 6px 0 0;
}

.tr { flex: none; }
.tr-1 { margin-left: 14px; }
.tr-2 { margin-left: 19px; }
.tr-3 { margin-left: 19px; }
.tr-4 { margin-left: 19px; }
.tr-5 { margin-left: 25px; }

/* ribbon */
.ribbon {
  height: 105px;
  flex: none;
  box-sizing: border-box;
  display: flex;
  background: #f2f2f2;
  border-bottom: 2px solid #cfcfcf;
}

.design-btn {
  width: 137px;
  height: 76px;
  margin: 13px 0 0 14px;
  flex: none;
  border: 1px solid #d0d0d0;
  border-radius: 6px;
  background: #f2f2f2;
  font: bold 14px "Liberation Sans", sans-serif;
  color: #333;
}

.ribbon-main {
  margin-left: 15px;
  flex: 1;
}

.ribbon-tabs {
  height: 30px;
  display: flex;
  gap: 29px;
  padding-left: 6px;
}

.r-tab {
  height: 25px;
  padding: 0 15px;
  line-height: 28px;
  font-size: 13.6px;
  color: #333;
}

.r-tab:last-child {
  margin-left: -3px;
}

.r-tab.active {
  color: #0696d7;
  border-bottom: 4px solid #0696d7;
}

.groups {
  display: flex;
  align-items: flex-start;
}

.group {
  display: flex;
  flex-direction: column;
  align-items: center;
}

.tools { display: flex; }

.tool {
  width: 54px;
  height: 54px;
  flex: none;
  overflow: visible;
}

.label {
  margin-top: -3px;
  height: 16px;
  line-height: 16px;
  font-size: 13.5px;
  white-space: nowrap;
  color: #333;
}

.sep {
  width: 1px;
  height: 64px;
  margin-top: 3px;
  flex: none;
  background: #d4d4d4;
}

.g-create { width: 325px; }
.g-create .label { padding-right: 16px; }
.g-auto { width: 142px; }
.g-modify { width: 335px; }
.g-assemble { width: 129px; }
.g-build { width: 129px; }
.g-inspect { width: 148px; }
.g-insert { width: 110px; }
.g-select { width: 142px; }

/* canvas */
.canvas {
  position: relative;
  flex: 1;
  overflow: hidden;
  background: #fff;
}

.scene {
  position: absolute;
  left: 0;
  top: 0;
}

.dim-text {
  font: 16px "Liberation Sans", sans-serif;
  fill: #1d4f9a;
}

.axis-z {
  font: bold 13px "Liberation Sans", sans-serif;
  fill: #8888f5;
}

.axis-x {
  font: bold 13px "Liberation Sans", sans-serif;
  fill: #f29a9a;
}

.cube-t {
  font: 7px "Liberation Sans", sans-serif;
  fill: #8a8a8a;
}

.panel {
  position: absolute;
  left: 4px;
  width: 374px;
  box-sizing: border-box;
  display: flex;
  align-items: center;
  background: #f0f0f0;
  border: 1px solid #cdcdcd;
  font-size: 14px;
  color: #666;
}

.nav-panel {
  top: 6px;
  height: 30px;
  padding-left: 6px;
}

.nav-panel span { margin-left: 12px; }

.comments-panel {
  top: 744px;
  height: 29px;
  padding-left: 31px;
  border-width: 0 0 2px;
}

.dot-btn {
  position: absolute;
  right: 13px;
  top: 7px;
  width: 12px;
  height: 12px;
  border-radius: 50%;
  background: #333;
  color: #fff;
  font: bold 12px/12px "Liberation Sans", sans-serif;
  text-align: center;
}

.tree {
  position: absolute;
  left: 0;
  top: 43px;
  font-size: 13.75px;
  color: #333;
}

.tree-root {
  display: flex;
  align-items: center;
  height: 26px;
  margin-bottom: 5px;
}

.root-arrow { margin-left: 27px; }

.pill {
  position: relative;
  display: flex;
  align-items: center;
  background: #f0f0f0;
}

.pill-root {
  height: 26px;
  width: 200px;
  margin-left: 13px;
}

.eye { margin-left: 5px; }

.root-name {
  margin-left: 6px;
  width: 138px;
  height: 20px;
  flex: none;
  display: flex;
  align-items: center;
  background: #999;
  color: #fff;
}

.root-cube {
  width: 31px;
  height: 20px;
  display: flex;
  align-items: center;
  justify-content: center;
  border-right: 1px solid #b5b5b5;
}

.root-name b {
  margin-left: 10px;
  font-size: 13.75px;
}

.radio { margin-left: 4px; }

.tree-row {
  display: flex;
  align-items: center;
  height: 24px;
  margin-bottom: 6px;
}

.arrow { margin-left: 50px; }

.tree-row .pill {
  height: 24px;
  margin-left: 13px;
  padding-right: 11px;
}

.ico {
  margin-left: 4px;
  flex: none;
}

.folder { margin-left: 11px; }
.folder.first { margin-left: 4px; }

.row-name {
  margin-left: 18px;
  white-space: nowrap;
}

.sketches::after {
  content: "";
  position: absolute;
  left: 31px;
  right: 0;
  bottom: 2px;
  height: 2px;
  background: repeating-linear-gradient(90deg, #6f86b0 0 4px, transparent 4px 7px);
}

.side-palette {
  position: absolute;
  left: 1887px;
  top: 156px;
  width: 28px;
  height: 166px;
  padding-top: 10px;
  box-sizing: border-box;
  display: flex;
  flex-direction: column;
  align-items: center;
  background: #f0f0f0;
  font-size: 12px;
  color: #333;
}

.side-palette span {
  margin-top: 89px;
  writing-mode: vertical-rl;
  transform: rotate(180deg);
}

.hint {
  position: absolute;
  left: 1203px;
  top: 380px;
  height: 22px;
  padding: 0 6px;
  line-height: 22px;
  background: #f0f0f0;
  font-size: 14.75px;
  color: #222;
  white-space: nowrap;
}

.dim-input {
  position: absolute;
  left: 1118px;
  top: 444px;
  width: 134px;
  height: 26px;
  display: flex;
  align-items: center;
  background: #f0f0f0;
}

.grip {
  width: 8px;
  height: 22px;
  margin-left: 3px;
  border-left: 1px dotted #aaa;
  border-right: 1px solid #ccc;
}

.dim-box {
  width: 88px;
  height: 24px;
  margin-left: 4px;
  box-sizing: border-box;
  background: #fff;
  border: 1px solid #ccc;
  text-align: center;
  font-size: 14px;
  line-height: 22px;
  color: #444;
}

.dim-box span {
  padding-right: 1px;
  border-right: 1px solid #222;
}

.dots {
  margin-left: 14px;
  display: flex;
  flex-direction: column;
  gap: 3px;
}

.dots i {
  width: 4px;
  height: 4px;
  border-radius: 50%;
  background: #888;
}

.navbar {
  position: absolute;
  left: 812px;
  top: 742px;
  width: 296px;
  height: 30px;
  padding-left: 2px;
  box-sizing: border-box;
  display: flex;
  align-items: center;
  background: #f0f0f0;
}

.nb {
  width: 24px;
  height: 24px;
  flex: none;
}

.m2 { margin-left: 0; }
.m4 { margin-left: 4px; }
.m5 { margin-left: 5px; }
.m8 { margin-left: 8px; }
.m9 { margin-left: 9px; }
.navbar .caret { margin: 0 1px; }
.navbar .c2 { margin-left: 3px; }

.measure {
  position: absolute;
  right: 17px;
  top: 752px;
  font-size: 13.85px;
  font-weight: bold;
  color: #333;
}

/* timeline */
.timeline {
  position: relative;
  height: 57px;
  flex: none;
  box-sizing: border-box;
  display: flex;
  align-items: center;
  background: #f0f0f0;
  border-top: 1px solid #d2d2d2;
}

.t1 { margin-left: 13px; }
.t2 { margin-left: 15px; }
.t3 { margin-left: 16px; }
.t4 { margin-left: 14px; }
.t5 { margin-left: 16px; }

.feature {
  position: relative;
  margin-left: 24px;
  width: 28px;
  height: 30px;
  margin-top: -6px;
}

.feature svg { display: block; }

.feature-stem {
  position: absolute;
  left: 15px;
  top: 30px;
  width: 2px;
  height: 8px;
  background: #ccc;
}

.marker {
  position: absolute;
  left: 199px;
  top: 13px;
  width: 15px;
  height: 8px;
  border-radius: 0 0 8px 8px;
  background: #666;
}

.marker::after {
  content: "";
  position: absolute;
  left: 6px;
  top: 8px;
  width: 3px;
  height: 32px;
  background: #666;
}

.gear {
  position: absolute;
  right: 14px;
  top: 20px;
}
</style>
